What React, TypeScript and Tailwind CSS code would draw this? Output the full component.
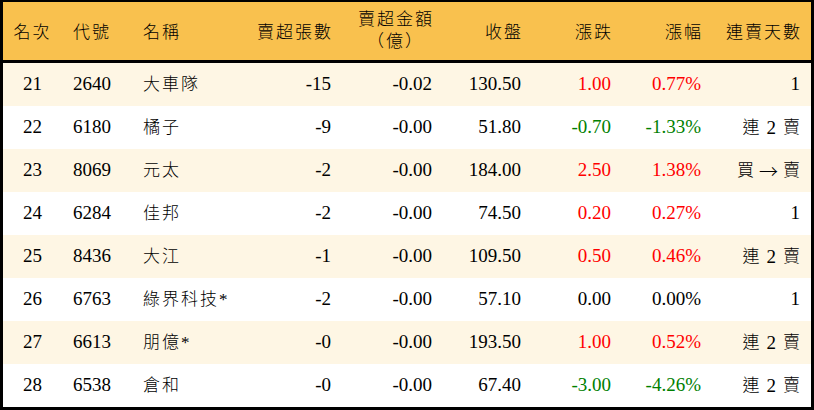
import React from 'react'

type Row = {
  rank: number
  code: string
  name: string
  lots: string
  amount: string
  close: string
  change: string
  pct: string
  days: string
}

const rows: Row[] = [
  { rank: 21, code: '2640', name: '大車隊', lots: '-15', amount: '-0.02', close: '130.50', change: '1.00', pct: '0.77%', days: '1' },
  { rank: 22, code: '6180', name: '橘子', lots: '-9', amount: '-0.00', close: '51.80', change: '-0.70', pct: '-1.33%', days: '連 2 賣' },
  { rank: 23, code: '8069', name: '元太', lots: '-2', amount: '-0.00', close: '184.00', change: '2.50', pct: '1.38%', days: '買 → 賣' },
  { rank: 24, code: '6284', name: '佳邦', lots: '-2', amount: '-0.00', close: '74.50', change: '0.20', pct: '0.27%', days: '1' },
  { rank: 25, code: '8436', name: '大江', lots: '-1', amount: '-0.00', close: '109.50', change: '0.50', pct: '0.46%', days: '連 2 賣' },
  { rank: 26, code: '6763', name: '綠界科技*', lots: '-2', amount: '-0.00', close: '57.10', change: '0.00', pct: '0.00%', days: '1' },
  { rank: 27, code: '6613', name: '朋億*', lots: '-0', amount: '-0.00', close: '193.50', change: '1.00', pct: '0.52%', days: '連 2 賣' },
  { rank: 28, code: '6538', name: '倉和', lots: '-0', amount: '-0.00', close: '67.40', change: '-3.00', pct: '-4.26%', days: '連 2 賣' },
]

const cols = 'grid grid-cols-[59px_70px_100px_109px_101px_89px_90px_90px_100px]'

function tone(change: string) {
  const v = parseFloat(change)
  if (v > 0) return 'text-[#ff0000]'
  if (v < 0) return 'text-[#008000]'
  return 'text-black'
}

// "連 2 賣" / "買 → 賣": CJK at 17px, middle part in the number font
function Days({ value }: { value: string }) {
  const parts = value.split(' ')
  if (parts.length < 3) return <>{value}</>
  const arrow = parts[1] === '→'
  return (
    <span className="inline-flex items-center">
      <span className="text-[17px] font-light">{parts[0]}</span>
      <span className={arrow ? 'mx-[5px] font-["Noto_Sans_CJK_TC"] font-light' : 'mx-[7px]'}>{parts[1]}</span>
      <span className="text-[17px] font-light">{parts[2]}</span>
    </span>
  )
}

export default function App() {
  return (
    <div
      className="w-[814px] h-[410px] bg-white border-x-[3px] border-b-[3px] border-t-2 border-black text-black"
      style={{ fontFamily: '"Liberation Serif", "Noto Sans CJK TC", serif' }}
    >
      {/* header */}
      <div className={`${cols} h-[61px] bg-[#f9c14e] border-b-[3px] border-black items-center text-[17px] font-light tracking-[2px]`}>
        <div className="text-center pt-1">名次</div>
        <div className="pl-[11px] pt-1">代號</div>
        <div className="pl-[11px] pt-1">名稱</div>
        <div className="text-right pr-[8px] pt-1">賣超張數</div>
        <div className="flex flex-col items-end pr-[8px] leading-[22px]">
          <div>賣超金額</div>
          <div className="pr-[10px]">（億）</div>
        </div>
        <div className="text-right pr-[8px] pt-1">收盤</div>
        <div className="text-right pr-[8px] pt-1">漲跌</div>
        <div className="text-right pr-[8px] pt-1">漲幅</div>
        <div className="text-right pr-[9px] pt-1">連賣天數</div>
      </div>

      {/* rows */}
      {rows.map((r, i) => (
        <div
          key={r.rank}
          className={`${cols} h-[43px] items-center text-[19px] ${i % 2 === 0 ? 'bg-[#fef6e4]' : 'bg-white'}`}
        >
          <div className="text-center">{r.rank}</div>
          <div className="pl-[11px]">{r.code}</div>
          <div className="pl-[11px] text-[17px] font-light tracking-[2px]">{r.name}</div>
          <div className="text-right pr-[10px]">{r.lots}</div>
          <div className="text-right pr-[10px]">{r.amount}</div>
          <div className="text-right pr-[10px]">{r.close}</div>
          <div className={`text-right pr-[10px] ${tone(r.change)}`}>{r.change}</div>
          <div className={`text-right pr-[10px] ${tone(r.change)}`}>{r.pct}</div>
          <div className="text-right pr-[11px]">
            <Days value={r.days} />
          </div>
        </div>
      ))}
    </div>
  )
}
